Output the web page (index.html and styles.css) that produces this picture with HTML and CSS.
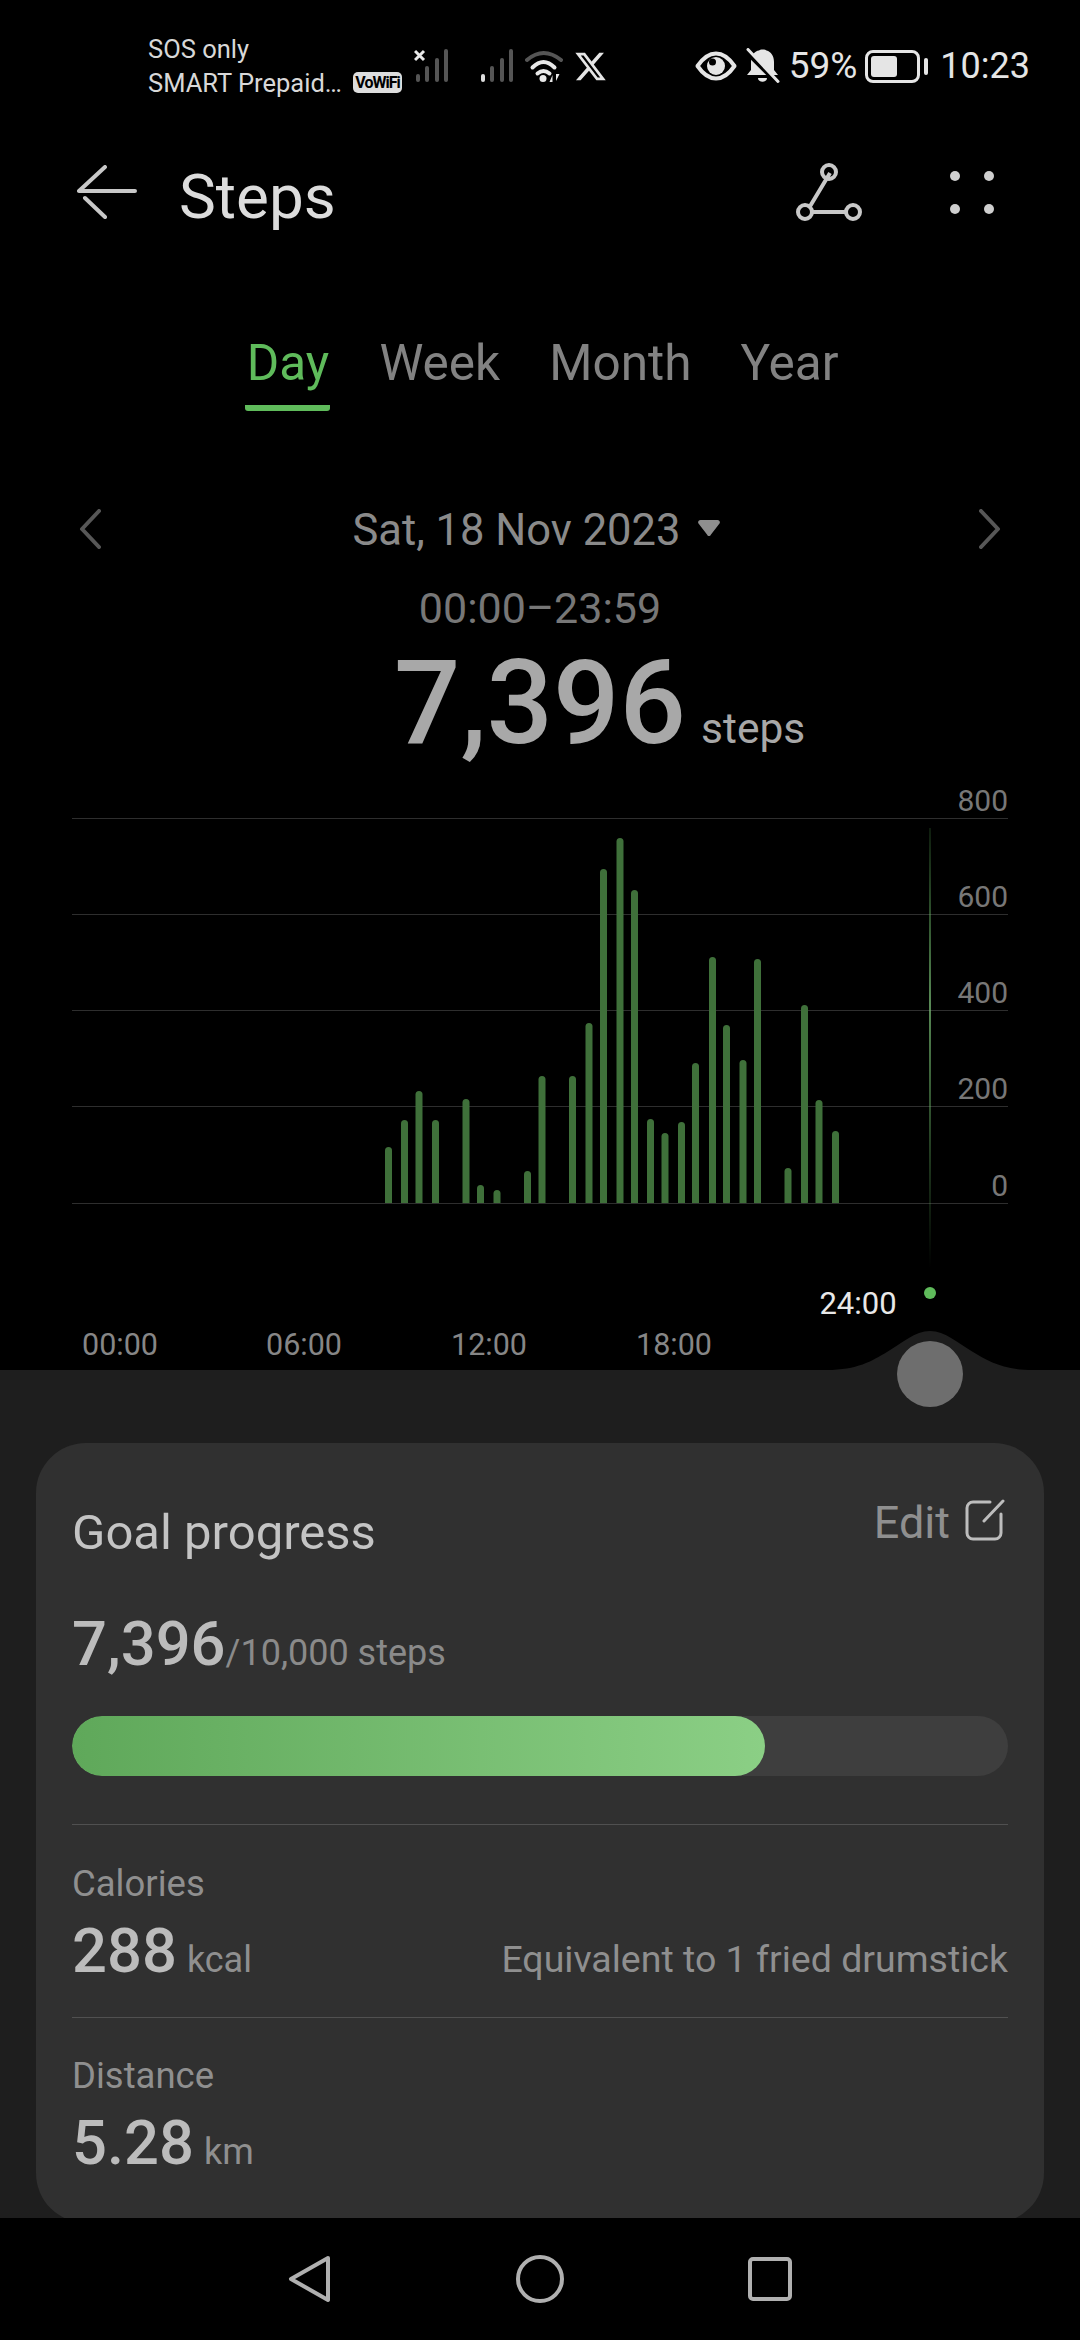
FILE: index.html
```html
<!DOCTYPE html>
<html lang="en">
<head>
<meta charset="utf-8">
<title>Steps</title>
<link rel="stylesheet" href="styles.css">
</head>
<body>
<div class="page">
  <div class="status">
    <div class="carrier"><div>SOS only</div><div>SMART Prepaid…</div></div>
    <div class="badge">VoWiFi</div>
    <svg class="sig1" width="36" height="34" viewBox="0 0 36 34"><g class="sigdim"><rect x="2" y="25" width="4" height="8" rx="2"/><rect x="11" y="17" width="4" height="16" rx="2"/><rect x="21" y="9" width="4" height="24" rx="2"/><rect x="30" y="0" width="4" height="33" rx="2"/></g><path class="sigx" d="M1 2l9 9M10 2l-9 9"/></svg>
    <svg class="sig2" width="36" height="34" viewBox="0 0 36 34"><g class="sigdim"><rect x="11" y="17" width="4" height="16" rx="2"/><rect x="21" y="9" width="4" height="24" rx="2"/><rect x="30" y="0" width="4" height="33" rx="2"/></g><rect class="sigon" x="2" y="25" width="4" height="8" rx="2"/></svg>
    <svg class="wifi" width="38" height="34" viewBox="0 0 38 34"><path class="wdim" d="M2 11Q18.500-3 36 11"/><path class="won" d="M7.500 18.500Q18.500 7.500 29.500 18.500M12.500 24.500Q18.500 19.500 24.500 24.500"/><circle class="wfill" cx="18" cy="29.500" r="3.500"/><path class="wfill" d="M27.500 33V26l-3 7zM31 25v7l3.500-7z"/></svg>
    <svg class="xlogo" width="31" height="31" viewBox="1 2 22 20"><path d="M18.244 2.250h3.308l-7.227 8.260 8.502 11.240H16.170l-5.214-6.817L4.990 21.750H1.680l7.730-8.835L1.254 2.250H8.080l4.713 6.231zm-1.161 17.520h1.833L7.084 4.126H5.117z"/></svg>
    <div class="status-right">
      <svg width="42" height="30" viewBox="0 0 42 30"><path class="eye" d="M2.500 15C9 5.500 15 2.500 21 2.500S33 5.500 39.500 15C33 24.500 27 27.500 21 27.500S9 24.500 2.500 15z"/><circle class="eyeball" cx="21" cy="15" r="9"/><circle class="eyedot" cx="17.500" cy="11" r="3.500"/></svg>
      <svg class="bell" width="34" height="36" viewBox="0 0 34 36"><path class="bellfill" d="M1 27l4-5V14C5 7 9 3 13 2.500 13.500 1 20 1 20.500 2.500 25 3.500 28 8 28 14v8l4 5z"/><path class="bellfill" d="M12 30h9c0 5-9 5-9 0z"/><path class="bellgap" d="M-1 3l32 32"/><path class="bellslash" d="M2 1.500l30 32"/></svg>
      <span class="pct">59%</span>
      <div class="battery"><div class="battery-body"><div class="battery-fill"></div></div><div class="battery-nub"></div></div>
      <span class="clock">10:23</span>
    </div>
  </div>

  <div class="header">
    <svg class="back" width="60" height="54" viewBox="0 0 60 54"><path d="M2 26H58M2 26L28 2M8 33L28 52"/></svg>
    <h1 class="title">Steps</h1>
    <svg class="route" width="70" height="60" viewBox="0 0 70 60"><path d="M36 11L15 46M18 50H52"/><circle cx="35" cy="10" r="7"/><circle cx="11" cy="50" r="7"/><circle cx="59" cy="50" r="7"/></svg>
    <div class="dots"><i></i><i></i><i></i><i></i></div>
  </div>

  <div class="tabs">
    <div class="tab tab-on">Day</div>
    <div class="tab">Week</div>
    <div class="tab">Month</div>
    <div class="tab">Year</div>
  </div>

  <div class="date-row">
    <svg class="chev" width="22" height="40" viewBox="0 0 22 40"><path d="M20 2L3 20l17 18"/></svg>
    <div class="date"><span>Sat, 18 Nov 2023</span><svg width="22" height="16" viewBox="0 0 22 16"><path d="M2.500 0h17c2 0 3 2 2 3.500L13 14.500c-1 2-3 2-4 0L.5 3.500C-.5 2 .5 0 2.500 0z"/></svg></div>
    <svg class="chev" width="22" height="40" viewBox="0 0 22 40"><path d="M2 2l17 18L2 38"/></svg>
  </div>
  <div class="range">00:00–23:59</div>
  <div class="total"><span class="total-num">7,396</span><span class="total-unit">steps</span></div>

  <svg class="chart" width="1080" height="590" viewBox="0 780 1080 590">
    <defs>
      <clipPath id="plot"><rect x="0" y="780" width="1080" height="423"/></clipPath>
      <linearGradient id="cursor" x1="0" y1="0" x2="0" y2="1"><stop offset="0" stop-color="#5fbb5b" stop-opacity="0.2"/><stop offset="0.4" stop-color="#7cc078" stop-opacity="0.95"/><stop offset="1" stop-color="#5fbb5b" stop-opacity="0"/></linearGradient>
    </defs>
    <g class="grid"><path d="M72 818.500H1008M72 914.500H1008M72 1010.500H1008M72 1106.500H1008M72 1203.500H1008"/></g>
    <g class="bars" clip-path="url(#plot)">
      <rect x="385" y="1147" width="7" height="70" rx="3.500"/>
      <rect x="401" y="1120" width="7" height="90" rx="3.500"/>
      <rect x="415.500" y="1091" width="7" height="120" rx="3.500"/>
      <rect x="432" y="1120" width="7" height="90" rx="3.500"/>
      <rect x="462.500" y="1099" width="7" height="110" rx="3.500"/>
      <rect x="477" y="1185" width="7" height="30" rx="3.500"/>
      <rect x="493.500" y="1190" width="7" height="30" rx="3.500"/>
      <rect x="524" y="1171" width="7" height="40" rx="3.500"/>
      <rect x="538.500" y="1076" width="7" height="140" rx="3.500"/>
      <rect x="569" y="1076" width="7" height="140" rx="3.500"/>
      <rect x="585.500" y="1023" width="7" height="190" rx="3.500"/>
      <rect x="600" y="869" width="7" height="340" rx="3.500"/>
      <rect x="616.500" y="838" width="7" height="370" rx="3.500"/>
      <rect x="631" y="890" width="7" height="320" rx="3.500"/>
      <rect x="647" y="1119" width="7" height="90" rx="3.500"/>
      <rect x="661.500" y="1133" width="7" height="80" rx="3.500"/>
      <rect x="678" y="1122" width="7" height="90" rx="3.500"/>
      <rect x="692" y="1063" width="7" height="150" rx="3.500"/>
      <rect x="709" y="957" width="7" height="250" rx="3.500"/>
      <rect x="723" y="1025" width="7" height="180" rx="3.500"/>
      <rect x="739.500" y="1060" width="7" height="150" rx="3.500"/>
      <rect x="754" y="959" width="7" height="250" rx="3.500"/>
      <rect x="784.500" y="1168" width="7" height="40" rx="3.500"/>
      <rect x="801" y="1005" width="7" height="200" rx="3.500"/>
      <rect x="815.500" y="1100" width="7" height="110" rx="3.500"/>
      <rect x="832" y="1131" width="7" height="80" rx="3.500"/>
    </g>
    <rect x="929.250" y="828" width="1.500" height="440" fill="url(#cursor)"/>
    <circle class="dot" cx="930" cy="1293" r="6"/>
    <g class="ylab">
      <text x="1008" y="811">800</text>
      <text x="1008" y="907">600</text>
      <text x="1008" y="1003">400</text>
      <text x="1008" y="1099">200</text>
      <text x="1008" y="1196">0</text>
    </g>
    <g class="xlab">
      <text x="120" y="1355">00:00</text>
      <text x="304" y="1355">06:00</text>
      <text x="489" y="1355">12:00</text>
      <text x="674" y="1355">18:00</text>
    </g>
    <text class="now" x="858" y="1314">24:00</text>
  </svg>

  <div class="sheet">
    <svg class="knob" width="206" height="80" viewBox="0 0 206 80"><path class="bump" d="M0 39C30 39 45 30 60 21 75 12 88 0 103 0 118 0 131 12 146 21 161 30 176 39 206 39V42H0z"/><circle class="knob-c" cx="103" cy="43" r="33"/></svg>
    <div class="card">
      <div class="card-head">
        <div class="card-title">Goal progress</div>
        <div class="edit"><span>Edit</span><svg width="40" height="42" viewBox="0 0 40 42"><path d="M25 3H8A6 6 0 0 0 2 9V34A6 6 0 0 0 8 40H30A6 6 0 0 0 36 34V15M19 22L38 2"/></svg></div>
      </div>
      <div class="goal"><span class="val">7,396</span><span class="goal-of">/10,000 steps</span></div>
      <div class="bar"><div class="bar-fill" style="width:74%"></div></div>
      <div class="metric metric-a">
        <div class="metric-label">Calories</div>
        <div class="metric-row"><span class="val">288</span><span class="unit">kcal</span><span class="note">Equivalent to 1 fried drumstick</span></div>
      </div>
      <div class="metric metric-b">
        <div class="metric-label">Distance</div>
        <div class="metric-row"><span class="val">5.28</span><span class="unit">km</span></div>
      </div>
    </div>
  </div>

  <div class="nav">
    <svg width="48" height="48" viewBox="0 0 48 48"><path d="M42 3L5 24L42 45z"/></svg>
    <svg width="48" height="48" viewBox="0 0 48 48"><circle cx="24" cy="24" r="22"/></svg>
    <svg width="48" height="48" viewBox="0 0 48 48"><rect x="4" y="4" width="40" height="40" rx="3"/></svg>
  </div>
</div>
</body>
</html>
```
FILE: styles.css
```css
* { box-sizing: border-box; }
html, body { margin: 0; padding: 0; background: #000; }
body { font-family: Roboto, "Noto Sans", sans-serif; color: #e0e0e0; }
.page { width: 1080px; height: 2340px; overflow: hidden; display: flex; flex-direction: column; background: #000; }

/* status bar */
.status { height: 132px; flex: none; display: flex; align-items: center; padding: 0 50px 0 148px; }
.carrier { width: 205px; font-size: 25.500px; line-height: 34px; color: #d8d8d8; white-space: nowrap; }
.badge { width: 49px; height: 21px; margin-top: 33px; background: #ddd; border-radius: 5px; color: #000; font-size: 16px; font-weight: 700; line-height: 21px; text-align: center; letter-spacing: -1px; white-space: nowrap; }
.sig1 { margin-left: 12px; margin-top: -1px; }
.sig2 { margin-left: 29px; margin-top: -1px; }
.wifi { margin-left: 10px; margin-top: -1px; }
.xlogo { margin-left: 12px; margin-top: 0; }
.sigdim { fill: #555; }
.sigon { fill: #ddd; }
.sigx { stroke: #e8e8e8; stroke-width: 3; fill: none; }
.wdim { fill: none; stroke: #555; stroke-width: 4; stroke-linecap: round; }
.won { fill: none; stroke: #e8e8e8; stroke-width: 4; stroke-linecap: round; }
.wfill { fill: #e8e8e8; }
.xlogo path { fill: #e5e5e5; }
.status-right { margin-left: auto; display: flex; align-items: center; }
.eye { fill: none; stroke: #e5e5e5; stroke-width: 4; stroke-linejoin: round; }
.eyeball { fill: #e5e5e5; }
.eyedot { fill: #000; }
.bell { margin-left: 9px; }
.bellfill { fill: #e5e5e5; }
.bellgap { stroke: #000; stroke-width: 4; fill: none; }
.bellslash { stroke: #e5e5e5; stroke-width: 3; fill: none; stroke-linecap: round; }
.pct { margin-left: 9px; font-size: 37px; color: #e5e5e5; line-height: 40px; }
.battery { margin-left: 8px; display: flex; align-items: center; gap: 4px; }
.battery-body { width: 55px; height: 33px; border: 3px solid #e5e5e5; border-radius: 8px; padding: 3px; }
.battery-fill { width: 26px; height: 100%; background: #e5e5e5; border-radius: 3px; }
.battery-nub { width: 4px; height: 17px; background: #e5e5e5; border-radius: 2px; }
.clock { margin-left: 12px; font-size: 36px; color: #e5e5e5; line-height: 40px; }

/* header */
.header { height: 120px; flex: none; display: flex; align-items: center; padding: 0 86px 0 77px; }
.back path { fill: none; stroke: #c8c8c8; stroke-width: 4; stroke-linecap: round; }
.title { margin: 9px 0 0 42px; font-size: 62px; font-weight: 450; line-height: 70px; color: #dcdcdc; }
.route { margin-left: auto; }
.route path { fill: none; stroke: #c8c8c8; stroke-width: 4; }
.route circle { fill: none; stroke: #c8c8c8; stroke-width: 4; }
.dots { margin-left: 86px; width: 44px; height: 43px; display: grid; grid-template-columns: 10px 10px; grid-template-rows: 10px 10px; justify-content: space-between; align-content: space-between; }
.dots i { display: block; background: #cfcfcf; border-radius: 50%; }

/* tabs */
.tabs { flex: none; display: flex; justify-content: center; gap: 49px; padding: 81px 0 0 4px; }
.tab { font-size: 49.500px; line-height: 60px; height: 78px; color: #828282; }
.tab-on { width: 85px; text-align: center; color: #5fbb5b; border-bottom: 6px solid #5fbb5b; border-radius: 0 0 3px 3px; }

/* date */
.date-row { flex: none; margin-top: 95px; height: 50px; display: flex; align-items: center; justify-content: space-between; padding: 0 79px; }
.chev { margin-top: -5px; }
.chev path { fill: none; stroke: #575757; stroke-width: 4; stroke-linecap: round; stroke-linejoin: round; }
.date { display: flex; align-items: center; gap: 18px; font-size: 43.500px; line-height: 50px; color: #8a8a8a; margin-right: 7px; white-space: nowrap; }
.date svg { margin-top: -6px; }
.date path { fill: #8f8f8f; }
.range { flex: none; margin-top: 27px; font-size: 43px; line-height: 50px; color: #777; text-align: center; }
.total { flex: none; margin-top: 10px; height: 120px; display: grid; grid-template-columns: 1fr auto 1fr; align-items: baseline; color: #a8a8a8; }
.total-num { grid-column: 2; font-size: 117px; line-height: 120px; font-weight: 470; }
.total-unit { grid-column: 3; margin-left: 15px; font-size: 42.500px; line-height: 50px; font-weight: 450; }

/* chart */
.chart { display: block; flex: none; margin-top: 17px; }
.grid path { stroke: #2e2e2e; stroke-width: 1; fill: none; }
.bars rect { fill: #3f703a; }
.dot { fill: #5fbb5b; }
.ylab text { font-size: 30px; fill: #777; text-anchor: end; }
.xlab text { font-size: 30.500px; fill: #868686; text-anchor: middle; }
.now { font-size: 31px; fill: #e8e8e8; text-anchor: middle; }

/* sheet */
.sheet { flex: none; height: 848px; position: relative; background: #1e1e1e; padding: 73px 36px 0; }
.knob { position: absolute; left: 827px; top: -39px; }
.bump { fill: #1e1e1e; }
.knob-c { fill: #6e6e6e; }
.card { background: #303030; border-radius: 50px; padding: 60px 36px 45px; }
.card-head { display: flex; justify-content: space-between; align-items: flex-start; }
.card-title { font-size: 49px; font-weight: 450; line-height: 60px; color: #c4c4c4; }
.edit { display: flex; align-items: center; gap: 15px; margin-top: -5px; margin-right: 3px; font-size: 45px; line-height: 50px; color: #8f8f8f; }
.edit svg { margin-top: -6px; }
.edit path { fill: none; stroke: #bdbdbd; stroke-width: 3; stroke-linecap: round; }
.goal { margin-top: 46px; height: 70px; display: flex; align-items: baseline; }
.val { font-size: 61.500px; font-weight: 470; line-height: 70px; color: #bcbcbc; }
.goal-of { font-size: 36px; line-height: 40px; color: #8a8a8a; }
.bar { margin-top: 37px; height: 60px; border-radius: 30px; background: #3e3e3e; overflow: hidden; }
.bar-fill { height: 100%; border-radius: 30px; background: linear-gradient(90deg, #5fa85a, #8bcf85); }
.metric { border-top: 1px solid #505050; }
.metric-a { margin-top: 48px; padding: 37px 0 31px; }
.metric-b { padding: 36px 0 0; }
.metric-label { font-size: 36.500px; line-height: 44px; color: #8f8f8f; }
.metric-row { margin-top: 10px; height: 70px; display: flex; align-items: baseline; }
.unit { margin-left: 10px; font-size: 36px; line-height: 40px; color: #8f8f8f; }
.note { margin-left: auto; font-size: 37.500px; line-height: 40px; color: #8f8f8f; }

/* nav */
.nav { flex: none; position: relative; height: 122px; background: #000; display: flex; align-items: center; justify-content: center; gap: 182px; }
.nav path, .nav circle, .nav rect { fill: none; stroke: #b0b0b0; stroke-width: 4; stroke-linejoin: round; }
```
